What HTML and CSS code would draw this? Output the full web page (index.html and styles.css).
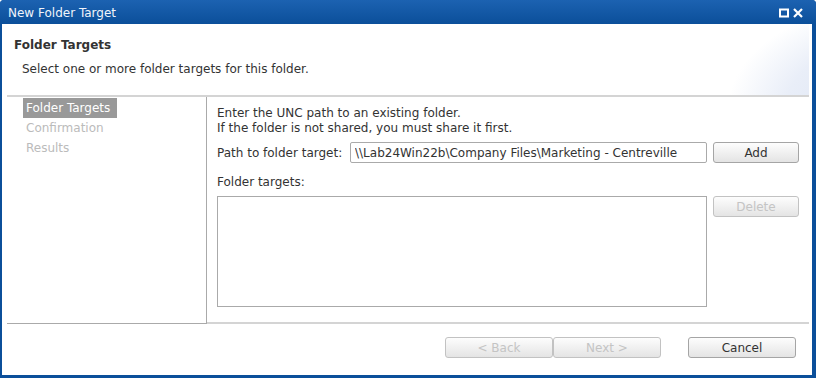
FILE: index.html
```html
<!DOCTYPE html>
<html lang="en">
<head>
    <meta charset="UTF-8">
    <title>New Folder Target</title>
    <link rel="stylesheet" href="styles.css">
</head>
<body>
    <div class="window">
        <div class="titlebar">
            <span class="title">New Folder Target</span>
            <div class="title-icons">
                <svg width="10" height="10" viewBox="0 0 10 10"><rect x="1" y="1.5" width="8" height="7" fill="none" stroke="#fff" stroke-width="2"/></svg>
                <svg width="10" height="10" viewBox="0 0 10 10"><path d="M1 1 L9 9 M9 1 L1 9" stroke="#fff" stroke-width="2.2"/></svg>
            </div>
        </div>

        <div class="content">
            <div class="header">
                <h1>Folder Targets</h1>
                <p>Select one or more folder targets for this folder.</p>
            </div>

            <div class="main">
                <div class="nav">
                    <div class="nav-item selected">Folder Targets</div>
                    <div class="nav-item">Confirmation</div>
                    <div class="nav-item">Results</div>
                </div>

                <div class="panel">
                    <p class="intro">Enter the UNC path to an existing folder.<br>If the folder is not shared, you must share it first.</p>

                    <div class="row">
                        <label>Path to folder target:</label>
                        <input type="text" class="path-input" value="\\Lab24Win22b\Company Files\Marketing - Centreville">
                        <button class="btn side-btn">Add</button>
                    </div>

                    <div class="list-label">Folder targets:</div>
                    <div class="row top">
                        <div class="listbox"></div>
                        <button class="btn side-btn" disabled>Delete</button>
                    </div>
                </div>
            </div>

            <div class="footer">
                <button class="btn foot-btn" disabled>&lt; Back</button>
                <button class="btn foot-btn" disabled>Next &gt;</button>
                <button class="btn foot-btn cancel">Cancel</button>
            </div>
        </div>
    </div>
</body>
</html>
```

FILE: styles.css
```css
body {
    margin: 0;
    font-family: "DejaVu Sans", Verdana, sans-serif;
    font-size: 12px;
    color: #333;
}

.window {
    width: 816px;
    height: 378px;
    box-sizing: border-box;
    background: #0b4f9a;
    border-radius: 4px 4px 0 0;
    padding: 0 4px 3px 2px;
    display: flex;
    flex-direction: column;
}

.titlebar {
    height: 24px;
    display: flex;
    align-items: center;
    justify-content: space-between;
    padding: 2px 13px 0 8px;
    box-sizing: border-box;
    background: linear-gradient(#1c62b1, #0b4f9a);
    margin: 0 -4px 0 -2px;
    border-radius: 4px 4px 0 0;
}

.title {
    color: #f0f4fa;
    font-size: 12px;
}

.title-icons {
    display: flex;
    gap: 4px;
}

.content {
    flex: 1;
    background: white;
    display: flex;
    flex-direction: column;
}

.header {
    height: 71px;
    border-bottom: 2px solid #d4d4d4;
    margin: 0 3px 0 5px;
    background:
        radial-gradient(ellipse 230px 150px at 110% 120%, #dbe3f3 0%, #e9eef8 45%, rgba(255,255,255,0) 70%);
}

.header h1 {
    font-size: 12px;
    font-weight: bold;
    margin: 0;
    padding: 14px 0 0 7px;
    color: #333;
}

.header p {
    margin: 10px 0 0 15px;
}

.main {
    height: 227px;
    display: flex;
    margin: 0 3px 0 5px;
}

.nav {
    width: 200px;
    border-right: 1px solid #aaa;
    border-bottom: 1px solid #aaa;
    padding: 1px 0 0 16px;
    box-sizing: border-box;
}

.nav-item {
    color: #bbb;
    height: 20px;
    line-height: 20px;
    padding: 0 3px;
    clear: both;
    float: left;
}

.nav-item.selected {
    background: #999;
    color: white;
    width: 88px;
}

.panel {
    flex: 1;
    border-bottom: 2px solid #d4d4d4;
    padding: 0 0 0 10px;
}

.intro {
    margin: 9px 0 0;
    line-height: 15px;
}

.row {
    display: flex;
    align-items: center;
    margin-top: 6px;
}

.row.top {
    align-items: flex-start;
    margin-top: 7px;
}

.row label {
    width: 133px;
}

.path-input {
    width: 357px;
    height: 21px;
    box-sizing: border-box;
    border: 1px solid #aaa;
    border-radius: 2px;
    font-family: inherit;
    font-size: 12px;
    color: #333;
    padding: 0 4px;
}

.list-label {
    margin-top: 12px;
}

.listbox {
    width: 490px;
    height: 111px;
    box-sizing: border-box;
    border: 1px solid #aaa;
}

.btn {
    height: 21px;
    box-sizing: border-box;
    border: 1px solid #a5a5a5;
    border-radius: 3px;
    background: linear-gradient(#fdfdfd, #e4e4e4);
    font-family: inherit;
    font-size: 12px;
    color: #333;
    padding: 0;
}

.btn:disabled {
    color: #c4c4c4;
    border-color: #c2c2c2;
}

.side-btn {
    width: 86px;
    margin-left: 6px;
}

.footer {
    flex: 1;
    display: flex;
    align-items: flex-start;
    justify-content: flex-end;
    padding: 13px 16px 0 0;
}

.foot-btn {
    width: 108px;
}

.cancel {
    margin-left: 27px;
}
```
